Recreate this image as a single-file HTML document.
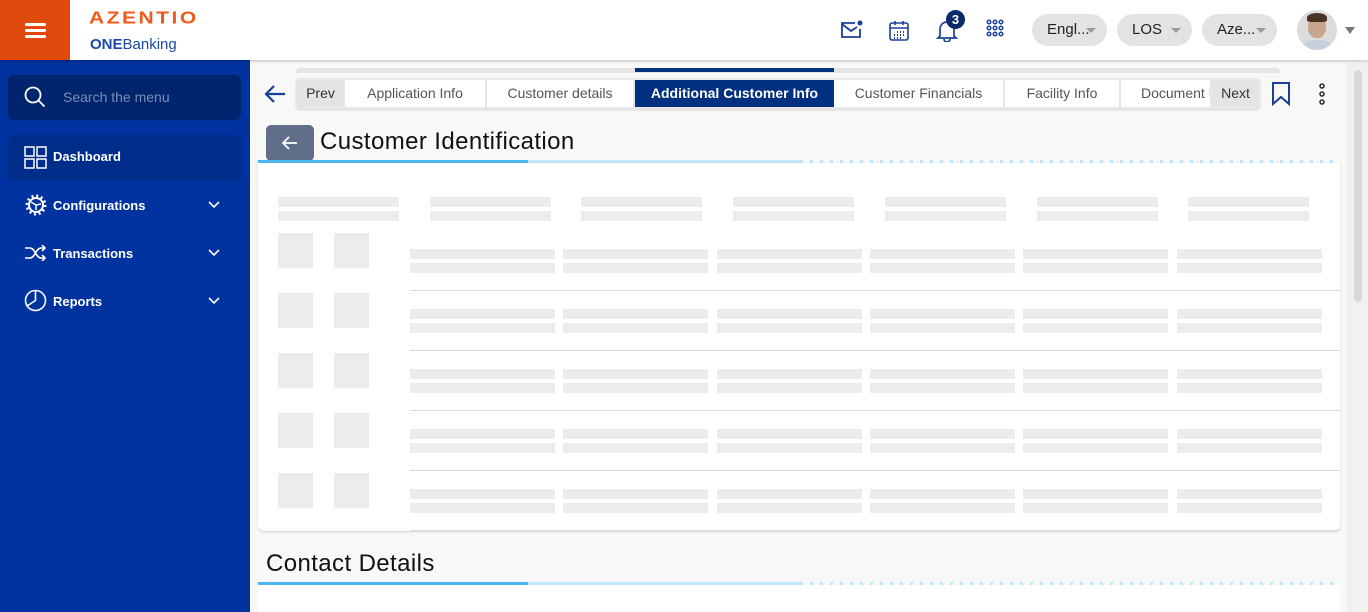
<!DOCTYPE html>
<html><head><meta charset="utf-8"><style>
*{margin:0;padding:0;box-sizing:border-box}
body{width:1368px;height:612px;overflow:hidden;background:#f8f8f8;font-family:"Liberation Sans",Arial,sans-serif;position:relative}
.a{position:absolute}
.top{left:0;top:0;width:1368px;height:60px;background:#fff;box-shadow:0 1px 3px rgba(0,0,0,.25);z-index:5}
.ham{left:0;top:0;width:70px;height:60px;background:#e04a0c}
.ham i{position:absolute;left:25px;width:21px;height:3px;background:#fff;border-radius:2px}
.side{left:0;top:60px;width:250px;height:552px;background:#0033a0}
.pill{top:14px;height:32px;border-radius:16px;background:#e3e3e3;font-size:15px;color:#222;line-height:32px;padding-left:15px}
.pill:after{content:"";position:absolute;right:11px;top:14px;border:5px solid transparent;border-top:5px solid #999}
.menu{left:24px;color:#fff;font-size:13px;font-weight:bold}
.sk{position:absolute;background:#ececec}
.tab{position:absolute;top:80px;height:27px;background:#fff;border-right:2px solid #e6e6e6;color:#555;font-size:14px;line-height:27px;text-align:center}
.h{font-size:24px;color:#111;letter-spacing:.4px}
</style></head><body>
<div class="a top">
 <div class="a ham"><i style="top:23px"></i><i style="top:29px"></i><i style="top:35px"></i></div>
 <div class="a" style="left:89px;top:8px;font-size:21px;font-weight:900;color:#f05a1a;letter-spacing:2.5px;transform:scaleY(.85);transform-origin:top left">AZENTIO</div>
 <div class="a" style="left:90px;top:36px;font-size:15px;color:#1a4aa8"><b>ONE</b>Banking</div>
 <svg class="a" style="left:840px;top:20px" width="24" height="20" viewBox="0 0 24 20" fill="none" stroke="#1a3f9a" stroke-width="1.8"><path d="M15 3H2v14h18V9"/><path d="M2 4l9 7 6-4"/><circle cx="20" cy="3" r="2.5" fill="#1a3f9a" stroke="none"/></svg>
 <svg class="a" style="left:889px;top:20px" width="20" height="21" viewBox="0 0 20 21" fill="none" stroke="#1a3f9a" stroke-width="1.6"><rect x="1" y="3" width="18" height="17" rx="2"/><path d="M1 8h18M6 1v4M14 1v4"/><path d="M8 12h1M11 12h1M14 12h1M5 15h1M8 15h1M11 15h1M14 15h1M5 18h1M8 18h1M11 18h1" stroke-width="2"/></svg>
 <svg class="a" style="left:936px;top:18px" width="22" height="24" viewBox="0 0 22 24" fill="none" stroke="#1a3f9a" stroke-width="1.7"><path d="M4 18V11a7 7 0 0114 0v7l2 2H2z"/><path d="M8 21a3 3 0 006 0"/></svg>
 <div class="a" style="left:946px;top:10px;width:19px;height:19px;border-radius:50%;background:#0b2a6b;color:#fff;font-size:13px;font-weight:bold;text-align:center;line-height:19px">3</div>
 <svg class="a" style="left:986px;top:19px" width="18" height="18" viewBox="0 0 18 18" fill="none" stroke="#1a3f9a" stroke-width="1.5"><circle cx="3" cy="3" r="1.8"/><circle cx="9" cy="3" r="1.8"/><circle cx="15" cy="3" r="1.8"/><circle cx="3" cy="9" r="1.8"/><circle cx="9" cy="9" r="1.8"/><circle cx="15" cy="9" r="1.8"/><circle cx="3" cy="15" r="1.8"/><circle cx="9" cy="15" r="1.8"/><circle cx="15" cy="15" r="1.8"/></svg>
 <div class="a pill" style="left:1032px;width:75px">Engl...</div>
 <div class="a pill" style="left:1117px;width:75px">LOS</div>
 <div class="a pill" style="left:1202px;width:75px">Aze...</div>
 <div class="a" style="left:1297px;top:10px;width:40px;height:40px;border-radius:50%;overflow:hidden;background:#dcdcdc">
  <div class="a" style="left:11px;top:6px;width:18px;height:22px;border-radius:45%;background:#c9a58c"></div>
  <div class="a" style="left:10px;top:3px;width:20px;height:9px;border-radius:50% 50% 20% 20%;background:#4a3426"></div>
  <div class="a" style="left:6px;top:30px;width:28px;height:14px;border-radius:40% 40% 0 0;background:#c8d0dc"></div>
 </div>
 <div class="a" style="left:1345px;top:27px;border:5px solid transparent;border-top:7px solid #777"></div>
</div>
<div class="a side">
 <div class="a" style="left:8px;top:15px;width:233px;height:45px;border-radius:6px;background:#00246e"></div>
 <svg class="a" style="left:24px;top:26px" width="22" height="22" viewBox="0 0 22 22" fill="none" stroke="#fff" stroke-width="1.8"><circle cx="9" cy="9" r="7.5"/><path d="M14.5 14.5l6 6"/></svg>
 <div class="a" style="left:63px;top:29px;font-size:14px;color:#7b8db5">Search the menu</div>
 <div class="a" style="left:8px;top:75px;width:233px;height:45px;border-radius:6px;background:#002d8a"></div>
 <svg class="a" style="left:24px;top:86px" width="23" height="23" viewBox="0 0 23 23" fill="none" stroke="#fff" stroke-width="1.5"><rect x="1" y="1" width="9" height="9"/><rect x="13" y="1" width="9" height="9"/><rect x="1" y="13" width="9" height="9"/><rect x="13" y="13" width="9" height="9"/></svg>
 <div class="a menu" style="left:53px;top:89px">Dashboard</div>
 <svg class="a" style="left:25px;top:134px" width="22" height="22" viewBox="0 0 22 22" fill="none" stroke="#fff" stroke-width="2"><circle cx="11" cy="11" r="7"/><circle cx="11" cy="11" r="9" stroke-dasharray="2 2.7" stroke-width="3"/><path d="M11 11L6 8M11 11l5-1M11 11v5" stroke-width="1.5"/></svg>
 <div class="a menu" style="left:53px;top:138px">Configurations</div>
 <svg class="a" style="left:24px;top:185px" width="22" height="16" viewBox="0 0 22 16" fill="none" stroke="#fff" stroke-width="1.6"><path d="M1 3h5c5 0 6 10 11 10h4M1 13h5c5 0 6-10 11-10h4M18 0l3 3-3 3M18 10l3 3-3 3"/></svg>
 <div class="a menu" style="left:53px;top:186px">Transactions</div>
 <svg class="a" style="left:24px;top:229px" width="23" height="23" viewBox="0 0 23 23" fill="none" stroke="#fff" stroke-width="1.6"><circle cx="11.5" cy="11.5" r="10"/><path d="M11.5 1.5v10L3 17"/></svg>
 <div class="a menu" style="left:53px;top:234px">Reports</div>
 <svg class="a" style="left:208px;top:141px" width="12" height="8" viewBox="0 0 12 8" fill="none" stroke="#fff" stroke-width="1.6"><path d="M1 1l5 5 5-5"/></svg>
 <svg class="a" style="left:208px;top:189px" width="12" height="8" viewBox="0 0 12 8" fill="none" stroke="#fff" stroke-width="1.6"><path d="M1 1l5 5 5-5"/></svg>
 <svg class="a" style="left:208px;top:237px" width="12" height="8" viewBox="0 0 12 8" fill="none" stroke="#fff" stroke-width="1.6"><path d="M1 1l5 5 5-5"/></svg>
</div>
<div class="a" style="left:296px;top:68px;width:984px;height:5px;background:#e4e4e4;border-radius:4px 4px 0 0"></div>
<div class="a" style="left:635px;top:68px;width:199px;height:4px;background:#00307f"></div>
<svg class="a" style="left:263px;top:84px" width="24" height="20" viewBox="0 0 24 20" fill="none" stroke="#1a3f9a" stroke-width="2.2"><path d="M22 10H3M11 2l-8 8 8 8"/></svg>
<div class="a" style="left:296px;top:78px;width:964px;height:31px;background:#e8e8e8;border-radius:4px;box-shadow:0 1px 2px rgba(0,0,0,.15)"></div>
<div class="a" style="left:297px;top:80px;width:47px;height:27px;background:#e4e4e4;color:#333;font-size:14px;line-height:27px;text-align:center;border-radius:4px">Prev</div>
<div class="tab" style="left:345px;width:142px">Application Info</div>
<div class="tab" style="left:487px;width:148px">Customer details</div>
<div class="tab" style="left:635px;width:199px;background:#00307f;color:#fff;font-weight:bold;border:0">Additional Customer Info</div>
<div class="tab" style="left:834px;width:171px">Customer Financials</div>
<div class="tab" style="left:1005px;width:116px">Facility Info</div>
<div class="tab" style="left:1121px;width:91px;text-align:left;padding-left:20px;overflow:hidden;white-space:nowrap">Document Upload</div>
<div class="a" style="left:1212px;top:80px;width:47px;height:27px;background:#e4e4e4;color:#333;font-size:14px;line-height:27px;text-align:center;border-radius:4px">Next</div>
<svg class="a" style="left:1272px;top:82px" width="18" height="24" viewBox="0 0 18 24" fill="none" stroke="#1a3f9a" stroke-width="2"><path d="M1 1h16v21l-8-7-8 7z"/></svg>
<svg class="a" style="left:1318px;top:82px" width="8" height="24" viewBox="0 0 8 24" fill="none" stroke="#333" stroke-width="1.6"><circle cx="4" cy="4" r="2"/><circle cx="4" cy="12" r="2"/><circle cx="4" cy="20" r="2"/></svg>
<div class="a" style="left:1346px;top:62px;width:22px;height:550px;background:#f1f1f1"></div>
<div class="a" style="left:1354px;top:70px;width:8px;height:232px;background:#d6dadd;border-radius:4px"></div>
<div class="a" style="left:266px;top:125px;width:48px;height:36px;background:#5f6e89;border-radius:5px"></div>
<svg class="a" style="left:282px;top:136px" width="16" height="14" viewBox="0 0 16 14" fill="none" stroke="#fff" stroke-width="1.8"><path d="M15 7H2M7 1L1 7l6 6"/></svg>
<div class="a h" style="left:320px;top:128px">Customer Identification</div>
<div class="a" style="left:258px;top:160px;width:270px;height:3px;background:#4bb8ef"></div>
<div class="a" style="left:528px;top:160px;width:272px;height:3px;background:#bfe6fa"></div>
<div class="a" style="left:800px;top:160px;width:540px;height:3px;background:repeating-linear-gradient(90deg,#bfe6fa 0 3px,transparent 3px 10px)"></div>
<div class="a" style="left:258px;top:163px;width:1082px;height:368px;background:#fff;border-radius:0 0 6px 6px;box-shadow:0 1px 2px rgba(0,0,0,.15)"></div>
<div id="sk"></div>
<div class="a h" style="left:266px;top:550px">Contact Details</div>
<div class="a" style="left:258px;top:582px;width:270px;height:3px;background:#4bb8ef"></div>
<div class="a" style="left:528px;top:582px;width:272px;height:3px;background:#bfe6fa"></div>
<div class="a" style="left:800px;top:582px;width:540px;height:3px;background:repeating-linear-gradient(90deg,#bfe6fa 0 3px,transparent 3px 10px)"></div>
<div class="a" style="left:258px;top:585px;width:1082px;height:27px;background:#fff"></div>
<script>
var h='',hx=[278,430,581,733,885,1037,1188],bx=[410,563,717,870,1023,1177];
hx.forEach(function(x){h+='<div class="sk" style="left:'+x+'px;top:197px;width:121px;height:10px"></div><div class="sk" style="left:'+x+'px;top:211px;width:121px;height:10px"></div>';});
for(var r=0;r<5;r++){var y=233+r*60;
h+='<div class="sk" style="left:278px;top:'+y+'px;width:35px;height:35px"></div><div class="sk" style="left:334px;top:'+y+'px;width:35px;height:35px"></div>';
bx.forEach(function(x){h+='<div class="sk" style="left:'+x+'px;top:'+(y+16)+'px;width:145px;height:10px"></div><div class="sk" style="left:'+x+'px;top:'+(y+30)+'px;width:145px;height:10px"></div>';});
h+='<div class="sk" style="left:410px;top:'+(y+57)+'px;width:930px;height:1px;background:#d9d9d9"></div>';}
document.getElementById('sk').innerHTML=h;
</script>
</body></html>
